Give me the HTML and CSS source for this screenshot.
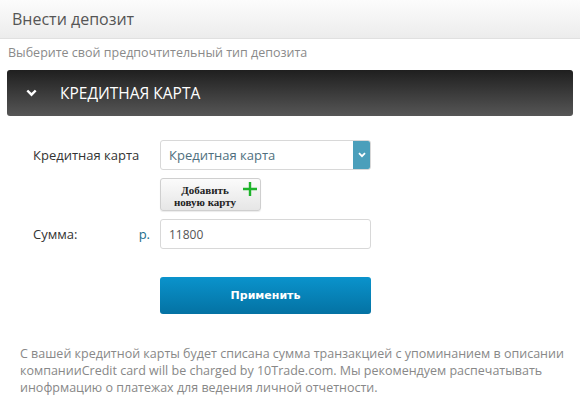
FILE: index.html
```html
<!DOCTYPE html>
<html lang="ru">
  <head>
    <meta charset="UTF-8" />
    <meta name="viewport" content="width=device-width, initial-scale=1.0" />
    <title>Внести депозит</title>
    <link rel="stylesheet" href="styles.css">
  </head>
  <body>
    <header class="top-bar">Внести депозит</header>
    <p class="subtitle">Выберите свой предпочтительный тип депозита</p>

    <div class="method-bar">
      <svg class="chevron" width="11" height="8" viewBox="0 0 11 8">
        <path d="M1.3 1.5 L5.5 5.7 L9.7 1.5" fill="none" stroke="#fff" stroke-width="2.4" />
      </svg>
      <span>Кредитная карта</span>
    </div>

    <form class="deposit-form">
      <div class="form-row">
        <label class="form-label">Кредитная карта</label>
        <div class="select-box">
          <span class="select-value">Кредитная карта</span>
          <span class="select-arrow">
            <svg width="8" height="6" viewBox="0 0 8 6">
              <path d="M1 1.2 L4 4.2 L7 1.2" fill="none" stroke="#fff" stroke-width="1.8" />
            </svg>
          </span>
        </div>
      </div>

      <div class="form-row">
        <span class="form-label"></span>
        <button type="button" class="add-card">
          <span>Добавить<br />новую карту</span>
          <svg class="plus" width="14" height="14" viewBox="0 0 14 14">
            <path d="M7 0 V14 M0 7 H14" stroke="#1db32a" stroke-width="2.4" />
          </svg>
        </button>
      </div>

      <div class="form-row">
        <label class="form-label">Сумма:<span class="currency">р.</span></label>
        <input class="amount" type="text" value="11800" />
      </div>

      <div class="form-row submit-row">
        <span class="form-label"></span>
        <button type="button" class="apply">Применить</button>
      </div>
    </form>

    <p class="notice">
      С вашей кредитной карты будет списана сумма транзакцией с упоминанием в описании
      компанииCredit card will be charged by 10Trade.com. Мы рекомендуем распечатывать
      инофрмацию о платежах для ведения личной отчетности.
    </p>
  </body>
</html>
```

FILE: styles.css
```css
body {
  font-family: "Open Sans", Arial, sans-serif;
  margin: 0;
  padding: 0;
  background-color: #fff;
  color: #333;
}
.top-bar {
  height: 38px;
  display: flex;
  align-items: center;
  padding-left: 12px;
  font-size: 16px;
  color: #555;
  background: linear-gradient(#fcfcfc, #ececec);
  border-bottom: 1px solid #e0e0e0;
}
.subtitle {
  margin: 5px 0 0 8px;
  font-size: 12.5px;
  line-height: 18px;
  color: #8a8a8a;
}
.method-bar {
  margin: 8px 7px 0 7px;
  height: 46px;
  display: flex;
  align-items: center;
  padding-left: 19px;
  border-radius: 3px;
  background: linear-gradient(#1f1f1f, #565656);
  color: #fff;
  font-size: 15.5px;
  text-transform: uppercase;
}
.method-bar .chevron {
  margin-right: 23px;
}
.deposit-form {
  margin: 24px 0 0 33px;
}
.form-row {
  display: flex;
  align-items: center;
  margin-bottom: 8px;
}
.form-label {
  width: 127px;
  display: flex;
  justify-content: space-between;
  font-size: 13px;
  color: #333;
  padding-right: 10px;
  box-sizing: border-box;
}
.currency {
  color: #1a6f8c;
}
.select-box {
  width: 211px;
  height: 30px;
  box-sizing: border-box;
  border: 1px solid #d8d8d8;
  border-radius: 3px;
  display: flex;
  align-items: center;
  justify-content: space-between;
  overflow: hidden;
}
.select-value {
  padding-left: 8px;
  font-size: 13px;
  color: #4f6f7e;
}
.select-arrow {
  width: 17px;
  height: 100%;
  background-color: #4b9fbb;
  display: flex;
  align-items: center;
  justify-content: center;
}
.add-card {
  width: 101px;
  height: 33px;
  padding: 0 0 0 6px;
  border: 1px solid #cfcfcf;
  border-radius: 3px;
  background: linear-gradient(#fbfbfb, #e6e6e6);
  box-shadow: 0 1px 1px rgba(0, 0, 0, 0.08);
  display: flex;
  align-items: center;
  font-family: "Liberation Serif", "Times New Roman", serif;
  font-weight: bold;
  font-size: 11px;
  line-height: 12px;
  color: #222;
}
.add-card span {
  flex: 1;
  text-align: center;
  padding-top: 2px;
}
.add-card .plus {
  align-self: flex-start;
  margin: 3px 3px 0 0;
}
.amount {
  width: 211px;
  height: 30px;
  box-sizing: border-box;
  border: 1px solid #d8d8d8;
  border-radius: 3px;
  padding: 0 8px;
  font-family: "Open Sans", Arial, sans-serif;
  font-size: 12px;
  color: #555;
}
.submit-row {
  margin-top: 28px;
}
.apply {
  width: 211px;
  height: 37px;
  border: none;
  border-radius: 3px;
  background: linear-gradient(#0a93cc, #0472a3);
  color: #fff;
  font-family: "DejaVu Sans", Verdana, sans-serif;
  font-weight: bold;
  font-size: 11px;
}
.notice {
  margin: 31px 12px 0 20px;
  font-size: 12.5px;
  line-height: 17px;
  color: #888;
}
```
